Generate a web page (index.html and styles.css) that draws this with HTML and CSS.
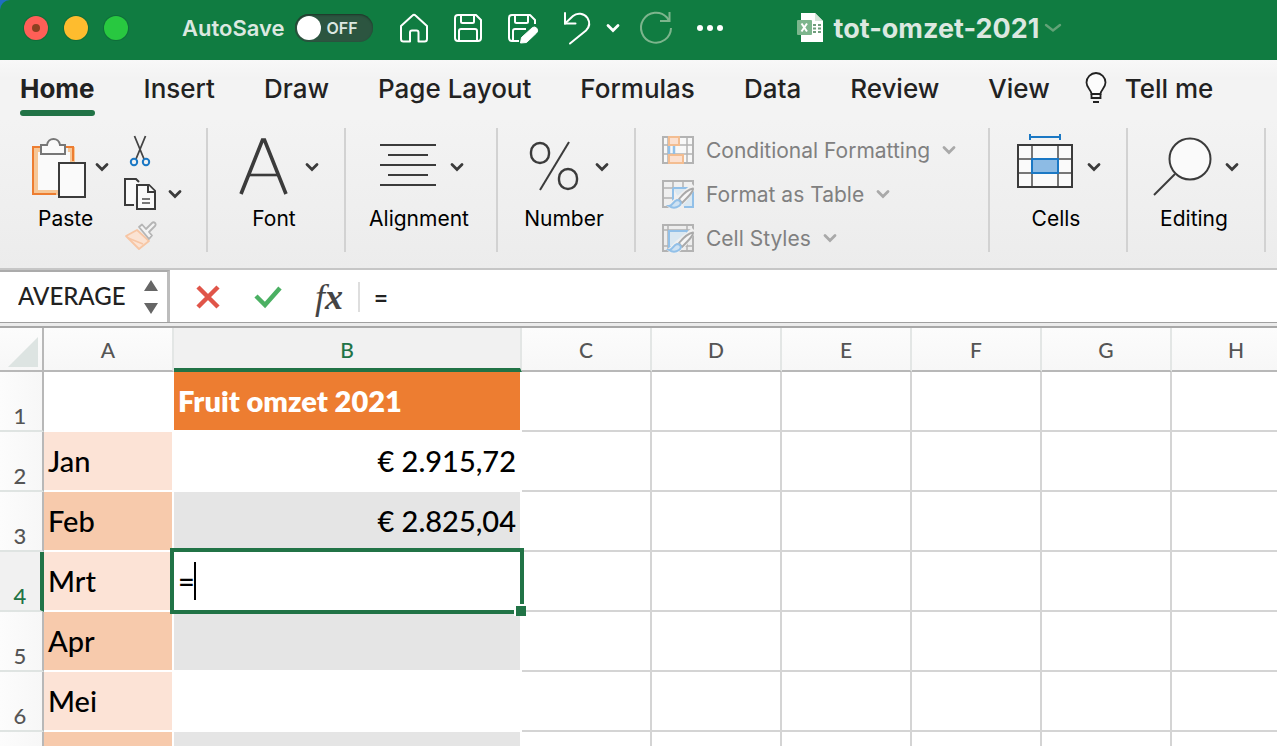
FILE: index.html
```
<!DOCTYPE html>
<html lang="nl">
  <head>
    <meta charset="UTF-8" />
    <meta name="viewport" content="width=device-width, initial-scale=1.0" />
    <title>tot-omzet-2021</title>
    <link rel="stylesheet" href="styles.css" />
  </head>
  <body>
    <svg class="symbols" aria-hidden="true">
      <symbol id="chevron" viewBox="0 0 14 14">
        <path d="M2 4.500L7 9.500L12 4.500" fill="none" stroke="currentColor" stroke-width="2.800" stroke-linecap="round" />
      </symbol>
      <symbol id="brush" viewBox="0 0 32 32">
        <path d="M5 28L14 19L30 6L34 10L24 24L16 31H8Z" fill="#f0f0f0" />
        <path d="M17 21C22 15 27 11 31 10.500C32 13 27 18 20 25Z" fill="#f6f6f6" stroke="#a9a9a9" stroke-width="1.800" />
        <path d="M7 28C11 28 11 23 15 22C19 22 20 26 17 28C14 30 10 30 7 28Z" fill="#cfe2f2" stroke="#92c0e8" stroke-width="2" />
      </symbol>
    </svg>

    <header class="titlebar">
      <div class="lights">
        <button class="light close" aria-label="Close"></button>
        <button class="light minimize" aria-label="Minimize"></button>
        <button class="light zoom" aria-label="Zoom"></button>
      </div>

      <label class="autosave">
        AutoSave
        <input type="checkbox" />
        <span class="switch">OFF</span>
      </label>

      <div class="quick-access">
        <button aria-label="Home">
          <svg width="32" height="32" viewBox="0 0 32 32" fill="none" stroke="#fff" stroke-width="2" stroke-linejoin="round">
            <path d="M3 14L14.500 3.500Q16 2 17.500 3.500L29 14V27Q29 29.500 26.500 29.500H20.500V20.500Q20.500 18.500 18.500 18.500H14Q12 18.500 12 20.500V29.500H5.500Q3 29.500 3 27Z" />
          </svg>
        </button>
        <button aria-label="Save">
          <svg width="32" height="32" viewBox="0 0 32 32" fill="none" stroke="#fff" stroke-width="2" stroke-linejoin="round">
            <path d="M6 3H24L29 8V26Q29 29 26 29H6Q3 29 3 26V6Q3 3 6 3Z" />
            <path d="M9 3V9.500Q9 11 10.500 11H20.500Q22 11 22 9.500V3" />
            <path d="M7 29V19Q7 17 9 17H23Q25 17 25 19V29" />
          </svg>
        </button>
        <button aria-label="Save As">
          <svg width="32" height="32" viewBox="0 0 32 32" fill="none" stroke="#fff" stroke-width="2" stroke-linejoin="round">
            <path d="M29 12V8L24 3H6Q3 3 3 6V26Q3 29 6 29H13" />
            <path d="M9 3V9.500Q9 11 10.500 11H20.500Q22 11 22 9.500V3" />
            <path d="M7 29V19Q7 17 9 17H20" />
            <path d="M14.500 31L15.500 25.500L26.500 15.500Q29 14 31 16.500Q32.500 19 30.500 21L20.500 30.500Z" fill="#fff" stroke-width="1" />
          </svg>
        </button>
        <button aria-label="Undo">
          <svg width="32" height="32" viewBox="0 0 32 32" fill="none" stroke="#fff" stroke-width="2" stroke-linecap="round">
            <path d="M5 1V11.500H15.500" />
            <path d="M5 11.500L13 4C17 0.500 24 1 27.500 6C30.500 11 29.500 15 26 18.500L10 31.500" />
          </svg>
        </button>
        <button class="undo-menu" aria-label="Undo history">
          <svg width="14" height="14"><use href="#chevron" /></svg>
        </button>
        <button class="redo" aria-label="Redo" disabled>
          <svg width="32" height="32" viewBox="0 0 32 32" fill="none" stroke="#7db58d" stroke-width="2">
            <path d="M31 16A15 15 0 1 1 27 5.500L29 9M20 9H29.500V0" />
          </svg>
        </button>
        <button aria-label="More">
          <svg width="32" height="32" viewBox="0 0 32 32" fill="#fff">
            <circle cx="6" cy="16" r="3" />
            <circle cx="16" cy="16" r="3" />
            <circle cx="26" cy="16" r="3" />
          </svg>
        </button>
      </div>

      <div class="document">
        <svg width="28" height="32" viewBox="0 0 28 32">
          <path d="M5 1H19L27 9V30H5Z" fill="#fff" />
          <path d="M19 1V9H27Z" fill="#d5e6da" />
          <path d="M17 13H20M22 13H25M17 16.500H20M22 16.500H25M17 20H20M22 20H25" stroke="#6f9d7c" stroke-width="2" />
          <rect x="1" y="8" width="15" height="15" rx="1" fill="#7db58d" />
          <path d="M5.500 11.500L11 19.500M11 11.500L5.500 19.500" stroke="#fff" stroke-width="2" />
        </svg>
        <h1>tot-omzet-2021</h1>
        <svg class="document-arrow" width="16" height="16" viewBox="0 0 16 16" fill="none" stroke="#62a277" stroke-width="2.400" stroke-linecap="round">
          <path d="M1 5L8 10.500L15 5" />
        </svg>
      </div>
    </header>

    <nav class="tabs">
      <a class="active" href="#home">Home</a>
      <a href="#insert">Insert</a>
      <a href="#draw">Draw</a>
      <a href="#layout">Page Layout</a>
      <a href="#formulas">Formulas</a>
      <a href="#data">Data</a>
      <a href="#review">Review</a>
      <a href="#view">View</a>
      <a class="tell-me" href="#tell-me">
        <svg width="22" height="32" viewBox="0 0 22 32" fill="none" stroke="#222" stroke-width="1.800">
          <path d="M6.500 22C6.500 18 1.500 16 1.500 10.500A9.500 9.500 0 0 1 20.500 10.500C20.500 16 15.500 18 15.500 22Z" fill="#fcfcfc" />
          <path d="M6.500 22V26H15.500V22M8 30H14" />
        </svg>
        Tell me
      </a>
    </nav>

    <section class="ribbon">
      <div class="group clipboard">
        <button class="tool">
          <span class="tool-icon">
            <svg width="56" height="64" viewBox="0 0 56 64">
              <path d="M10 12H4V54H26M36 12H40V26" fill="none" stroke="#f6c797" stroke-width="6" />
              <path d="M6 14H38V28H26V52H6Z" fill="#fafafa" />
              <path d="M10 9H1V56H24M34 9H41V23" fill="none" stroke="#ed7d31" stroke-width="2" />
              <path d="M9 7H15C16 -1 27 -1 28 7H33V16H9Z" fill="#fafafa" stroke="#777" stroke-width="2" />
              <rect x="27" y="25" width="26" height="34" fill="#fafafa" stroke="#3b3b3b" stroke-width="2" />
            </svg>
            <svg width="14" height="14"><use href="#chevron" /></svg>
          </span>
          Paste
        </button>
        <div class="small-tools">
          <button aria-label="Cut">
            <svg width="32" height="32" viewBox="0 0 32 32" fill="none">
              <path d="M10.500 0L20 23M21.500 0L12 23" stroke="#444" stroke-width="1.800" />
              <circle cx="10" cy="26" r="3.200" stroke="#1b78c4" stroke-width="2" />
              <circle cx="22" cy="26" r="3.200" stroke="#1b78c4" stroke-width="2" />
            </svg>
          </button>
          <button aria-label="Copy">
            <svg width="32" height="32" viewBox="0 0 32 32" fill="#fafafa" stroke="#3b3b3b" stroke-width="2">
              <path d="M10 27H1V1H12L15 4" />
              <path d="M13 7H25L31 13V31H13Z" />
              <path d="M24 7V14H31" />
              <path d="M18 21H26M18 25H26" stroke="#777" stroke-width="1.800" />
            </svg>
            <svg width="14" height="14"><use href="#chevron" /></svg>
          </button>
          <button aria-label="Format Painter" disabled>
            <svg width="32" height="32" viewBox="0 0 32 32" stroke-width="1.800" stroke-linejoin="round">
              <path d="M13 10L2 16L15 29L25 21Z" fill="#fbe3d3" stroke="#f7c6a4" />
              <path d="M4 18L19 24" stroke="#f7c6a4" />
              <path d="M15 7L18 4.500L22 9L28 3C30 1 33 4 31 6L25 12L28 15.500L25 19Z" fill="#f4f4f4" stroke="#b5b5b5" />
            </svg>
          </button>
        </div>
      </div>

      <div class="group">
        <button class="tool">
          <span class="tool-icon">
            <svg width="56" height="64" viewBox="0 0 56 64" fill="none" stroke="#3b3b3b" stroke-width="3.600">
              <path d="M6 58L27.500 4H29.500L51 58" />
              <path d="M14 39H43" stroke-width="2.600" />
            </svg>
            <svg width="14" height="14"><use href="#chevron" /></svg>
          </span>
          Font
        </button>
      </div>

      <div class="group wide">
        <button class="tool">
          <span class="tool-icon">
            <svg width="56" height="64" viewBox="0 0 56 64" stroke="#3b3b3b" stroke-width="2">
              <path d="M0 9H56M8 19H48M0 29H56M8 39H48M0 49H56" />
            </svg>
            <svg width="14" height="14"><use href="#chevron" /></svg>
          </span>
          Alignment
        </button>
      </div>

      <div class="group">
        <button class="tool">
          <span class="tool-icon">
            <svg width="56" height="64" viewBox="0 0 56 64" fill="none" stroke="#3b3b3b" stroke-width="2.400">
              <rect x="6" y="7" width="18" height="20" rx="9" />
              <rect x="34" y="33" width="18" height="20" rx="9" />
              <path d="M44 6L15 54" stroke-width="2" />
            </svg>
            <svg width="14" height="14"><use href="#chevron" /></svg>
          </span>
          Number
        </button>
      </div>

      <div class="group styles">
        <button disabled>
          <svg width="32" height="32" viewBox="0 0 32 32" fill="none" stroke="#b3b3b3" stroke-width="2">
            <path d="M1 3H31V29H1Z" fill="#f8f8f8" />
            <path d="M6 3V29M25 3V29M1 11H31M1 20H31" stroke-width="1.500" />
            <path d="M7 3H17V11H7ZM7 21H21V29H7Z" fill="#fbe0d0" stroke="#f3bd91" />
            <path d="M7 12V20M12 12V20" stroke="#92c0e8" stroke-width="2.500" />
          </svg>
          Conditional Formatting
          <svg width="14" height="14"><use href="#chevron" /></svg>
        </button>
        <button disabled>
          <svg width="32" height="32" viewBox="0 0 32 32" fill="none" stroke="#b3b3b3" stroke-width="2">
            <path d="M31 8V3H1V29H8" />
            <path d="M11 3V28M21 3V10M1 10H31M1 20H11" stroke-width="1.500" />
            <path d="M11 10H31V29H22M11 10V22" fill="#dbe8f1" stroke="#92c0e8" />
            <use href="#brush" width="32" height="32" stroke="none" />
          </svg>
          Format as Table
          <svg width="14" height="14"><use href="#chevron" /></svg>
        </button>
        <button disabled>
          <svg width="32" height="32" viewBox="0 0 32 32" fill="none" stroke="#b3b3b3" stroke-width="2">
            <path d="M1 3H31V29H1Z" />
            <path d="M6 3V29M25 3V29M1 8H31M1 24H31" stroke-width="1.500" />
            <path d="M7 25V9H25V12L12 25Z" fill="#dbe8f1" stroke="#92c0e8" />
            <use href="#brush" width="32" height="32" stroke="none" />
          </svg>
          Cell Styles
          <svg width="14" height="14"><use href="#chevron" /></svg>
        </button>
      </div>

      <div class="group">
        <button class="tool">
          <span class="tool-icon">
            <svg width="56" height="64" viewBox="0 0 56 64" fill="none">
              <rect x="1" y="9" width="54" height="42" fill="#fafafa" />
              <path d="M15 9V51M41 9V51M1 23H55M1 37H55" stroke="#777" stroke-width="2" />
              <rect x="1" y="9" width="54" height="42" stroke="#3b3b3b" stroke-width="2" />
              <rect x="15" y="23" width="26" height="14" fill="#8dbbe4" stroke="#1b78c4" stroke-width="2" />
              <path d="M13 1H43M13 -2V4M43 -2V4" stroke="#1b78c4" stroke-width="2" />
            </svg>
            <svg width="14" height="14"><use href="#chevron" /></svg>
          </span>
          Cells
        </button>
      </div>

      <div class="group">
        <button class="tool">
          <span class="tool-icon">
            <svg width="56" height="64" viewBox="0 0 56 64" fill="none" stroke="#3b3b3b" stroke-width="2">
              <circle cx="35" cy="23" r="20.500" fill="#fafafa" />
              <path d="M20 38L-1 59" />
            </svg>
            <svg width="14" height="14"><use href="#chevron" /></svg>
          </span>
          Editing
        </button>
      </div>
    </section>

    <div class="formula-bar">
      <div class="name-box">
        <input type="text" value="AVERAGE" aria-label="Name box" />
        <button aria-label="Names">
          <svg width="14" height="36" viewBox="0 0 14 36" fill="#666">
            <path d="M7 1L14 12H0ZM7 35L14 24H0Z" />
          </svg>
        </button>
      </div>
      <button aria-label="Cancel">
        <svg width="28" height="28" viewBox="0 0 28 28" stroke="#e05549" stroke-width="4.500">
          <path d="M4 4L24 24M24 4L4 24" />
        </svg>
      </button>
      <button aria-label="Enter">
        <svg width="28" height="28" viewBox="0 0 28 28" fill="none" stroke="#4bb063" stroke-width="4.500">
          <path d="M2 13L11 22L26 5" />
        </svg>
      </button>
      <button class="fx" aria-label="Insert function"><i>f<b>x</b></i></button>
      <input class="formula" type="text" value="=" aria-label="Formula" />
    </div>

    <main class="sheet">
      <table>
        <colgroup>
          <col class="col-head" />
          <col />
          <col class="col-wide" />
          <col />
          <col />
          <col />
          <col />
          <col />
          <col />
        </colgroup>
        <thead>
          <tr>
            <th class="corner" aria-label="Select all">
              <svg width="30" height="30" viewBox="0 0 30 30"><path d="M30 0V30H0Z" fill="#dde4e2" /></svg>
            </th>
            <th>A</th>
            <th class="selected">B</th>
            <th>C</th>
            <th>D</th>
            <th>E</th>
            <th>F</th>
            <th>G</th>
            <th>H</th>
          </tr>
        </thead>
        <tbody>
          <tr>
            <th>1</th>
            <td class="month-blank"></td>
            <td class="title">Fruit omzet 2021</td>
            <td></td><td></td><td></td><td></td><td></td><td></td>
          </tr>
          <tr>
            <th>2</th>
            <td class="month">Jan</td>
            <td class="amount">€ 2.915,72</td>
            <td></td><td></td><td></td><td></td><td></td><td></td>
          </tr>
          <tr>
            <th>3</th>
            <td class="month dark">Feb</td>
            <td class="amount dark">€ 2.825,04</td>
            <td></td><td></td><td></td><td></td><td></td><td></td>
          </tr>
          <tr>
            <th class="selected">4</th>
            <td class="month">Mrt</td>
            <td class="editing">
              <div class="editor">
                <input type="text" value="=" aria-label="B4" />
                <span class="caret"></span>
                <span class="handle"></span>
              </div>
            </td>
            <td></td><td></td><td></td><td></td><td></td><td></td>
          </tr>
          <tr>
            <th>5</th>
            <td class="month dark">Apr</td>
            <td class="amount dark"></td>
            <td></td><td></td><td></td><td></td><td></td><td></td>
          </tr>
          <tr>
            <th>6</th>
            <td class="month">Mei</td>
            <td class="amount"></td>
            <td></td><td></td><td></td><td></td><td></td><td></td>
          </tr>
          <tr>
            <th></th>
            <td class="month dark"></td>
            <td class="amount dark"></td>
            <td></td><td></td><td></td><td></td><td></td><td></td>
          </tr>
        </tbody>
      </table>
    </main>
  </body>
</html>
```
FILE: styles.css
```
* {
  margin: 0;
  padding: 0;
  box-sizing: border-box;
}

body {
  display: flex;
  flex-direction: column;
  height: 100vh;
  overflow: hidden;
  background: #1f6fc0;
  font-family: Inter, "Liberation Sans", sans-serif;
  color: #222;
}

button,
input {
  border: none;
  background: none;
  font: inherit;
  color: inherit;
  outline: none;
}

svg {
  display: block;
  flex: none;
  overflow: visible;
}

.symbols {
  position: absolute;
  width: 0;
  height: 0;
}

/* Title bar */
.titlebar {
  display: flex;
  align-items: center;
  height: 60px;
  flex: none;
  padding: 0 24px 4px;
  background: #107c41;
  border-top-left-radius: 10px;
  color: #fff;
}

.lights {
  display: flex;
  gap: 16px;
}

.light {
  display: flex;
  align-items: center;
  justify-content: center;
  width: 24px;
  height: 24px;
  border-radius: 50%;
  box-shadow: 0 0 0 1px #0f6e3a;
}

.close {
  background: #ff5f57;
}

.close::after {
  content: "";
  width: 8px;
  height: 8px;
  border-radius: 50%;
  background: #8c4020;
}

.minimize {
  background: #febc2e;
}

.zoom {
  background: #28c840;
}

.autosave {
  display: flex;
  align-items: center;
  gap: 10px;
  margin-left: 54px;
  font-size: 22px;
  font-weight: 600;
  color: #dce8e0;
}

.autosave input {
  position: absolute;
  opacity: 0;
}

.switch {
  display: flex;
  align-items: center;
  width: 78px;
  height: 28px;
  padding-left: 2px;
  gap: 6px;
  border-radius: 14px;
  background: #2c5540;
  box-shadow: inset 0 1px 2px #1c3527;
  font-size: 16px;
}

.switch::before {
  content: "";
  width: 24px;
  height: 24px;
  border-radius: 50%;
  background: #fff;
}

.quick-access {
  display: flex;
  align-items: center;
  gap: 22px;
  margin-left: 25px;
}

.undo-menu {
  margin: 0 -2px 0 -8px;
}

.document {
  display: flex;
  align-items: center;
  gap: 10px;
  margin-left: 70px;
}

.document h1 {
  font-size: 27px;
  font-weight: 700;
  color: #dce8e0;
}

.document-arrow {
  margin-left: -4px;
}

/* Tabs */
.tabs {
  display: flex;
  flex: none;
  gap: 49px;
  height: 60px;
  padding: 0 20px;
  background: linear-gradient(#f8f8f8, #f3f3f3 30%);
}

.tabs a {
  display: flex;
  align-items: center;
  height: 56px;
  font-size: 26px;
  font-weight: 500;
  color: #222;
  text-decoration: none;
  white-space: nowrap;
}

.tabs .active {
  position: relative;
  font-weight: 700;
}

.tabs .active::after {
  content: "";
  position: absolute;
  left: 0;
  right: 0;
  bottom: 0;
  height: 6px;
  border-radius: 3px;
  background: #217346;
}

.tabs .tell-me {
  gap: 18px;
  margin-left: -14px;
}

/* Ribbon */
.ribbon {
  display: flex;
  flex: none;
  height: 150px;
  padding: 8px 0 16px;
  border-bottom: 2px solid #c6c6c6;
  background: linear-gradient(#f3f3f3, #ececec);
}

.group {
  display: flex;
  justify-content: center;
  width: 138px;
  flex: none;
  border-right: 2px solid #d2d2d2;
}

.group.clipboard {
  justify-content: flex-start;
  width: 208px;
  gap: 15px;
  padding-left: 32px;
}

.group.wide {
  width: 152px;
}

.tool {
  display: flex;
  flex-direction: column;
  align-items: center;
  padding: 8px 4px 0 0;
  font-size: 21px;
  line-height: 26px;
  color: #000;
}

/* The arrow hangs out to the right, so the label sits nearer the icon */
.tool-icon {
  display: flex;
  gap: 14px;
  height: 70px;
  margin-right: -6px;
  color: #3b3b3b;
}

.tool-icon svg:last-child {
  margin-top: 24px;
}

.clipboard .tool {
  align-items: flex-start;
  padding: 10px 0 0;
  text-indent: 6px;
}

.clipboard .tool-icon {
  gap: 7px;
  height: 68px;
  margin-right: 0;
}

.clipboard .tool-icon svg:last-child {
  margin-top: 22px;
}

.small-tools {
  display: flex;
  flex-direction: column;
  gap: 10px;
  padding-top: 8px;
}

.small-tools button {
  display: flex;
  align-items: center;
  gap: 12px;
  color: #3b3b3b;
}

.group.styles {
  flex-direction: column;
  justify-content: flex-start;
  width: 354px;
  padding-left: 26px;
}

.styles button {
  display: flex;
  flex: none;
  align-items: center;
  gap: 12px;
  height: 44px;
  font-size: 21px;
  color: #808080;
}

.styles svg:last-child {
  color: #a9a9a9;
}

/* Formula bar */
.formula-bar {
  display: flex;
  align-items: center;
  flex: none;
  height: 58px;
  padding-bottom: 2px;
  border-bottom: 2px solid #a8a8a8;
  background: linear-gradient(#fff 52px, #a0a0a0 52px, #a0a0a0 53px, #ececec 53px);
}

.name-box {
  display: flex;
  align-items: center;
  align-self: flex-start;
  width: 170px;
  height: 52px;
  padding: 0 9px 0 18px;
  border-top: 2px solid #ababab;
  border-right: 3px solid #bdbdbd;
}

.name-box input {
  width: 126px;
  padding-bottom: 4px;
  font-family: Lato, "Liberation Sans", sans-serif;
  font-size: 24px;
  font-weight: 500;
}

.formula-bar > button {
  width: 28px;
  margin-left: 24px;
}

.formula-bar > button + button {
  margin-left: 32px;
}

.formula-bar > .fx {
  width: 30px;
  height: 30px;
  padding-right: 14px;
  border-right: 2px solid #dedede;
  box-sizing: content-box;
  font-family: "Liberation Serif", serif;
  font-size: 36px;
  line-height: 24px;
  color: #444;
}

.formula {
  flex: 1;
  min-width: 0;
  padding-left: 14px;
  font-family: Lato, "Liberation Sans", sans-serif;
  font-size: 24px;
  font-weight: 700;
}

/* Sheet */
.sheet {
  flex: 1;
  min-height: 0;
  overflow: hidden;
  background: #fff;
  font-family: Lato, "Liberation Sans", sans-serif;
}

table {
  width: 1302px;
  table-layout: fixed;
  border-collapse: separate;
  border-spacing: 0;
}

col {
  width: 130px;
}

.col-head {
  width: 44px;
}

.col-wide {
  width: 348px;
}

thead th {
  height: 44px;
  border-right: 2px solid #e3e6e5;
  border-bottom: 2px solid #b8b8b8;
  background: linear-gradient(#fcfcfc, #f7f7f7);
  font-size: 21px;
  font-weight: 500;
  color: #555;
}

thead .selected {
  padding-top: 2px;
  border-bottom: 4px solid #217346;
  background: #f1f1f1;
  color: #217346;
}

thead .corner {
  border-right-color: #b8b8b8;
}

.corner svg {
  margin: 6px 0 0 8px;
}

tbody th {
  height: 60px;
  padding: 0 2px 2px 0;
  border-right: 2px solid #b8b8b8;
  border-bottom: 2px solid #dfe4e2;
  background: linear-gradient(90deg, #fcfcfc, #f7f7f7);
  font-size: 22px;
  font-weight: 500;
  line-height: 24px;
  vertical-align: bottom;
  color: #555;
}

tbody .selected {
  padding-right: 0;
  border-right: 4px solid #217346;
  background: #f1f1f1;
  color: #217346;
}

td {
  height: 60px;
  padding: 0 4px;
  border-right: 2px solid #d4d4d4;
  border-bottom: 2px solid #d4d4d4;
  font-size: 29px;
  font-weight: 500;
  line-height: 34px;
  color: #000;
  white-space: nowrap;
}

.month-blank,
.month,
.title,
.amount,
.editing {
  border-color: #fff;
}

.month,
.title,
.amount.dark {
  background-clip: padding-box;
}

.month {
  background-color: #fce3d6;
}

.month.dark {
  background-color: #f7caac;
}

.title {
  background-color: #ed7d31;
  font-weight: 800;
  color: #fff;
}

.amount {
  text-align: right;
}

.amount.dark {
  background-color: #e5e5e5;
}

.editing {
  position: relative;
}

/* Frame lies over the edges of the neighbouring cells */
.editor {
  position: absolute;
  inset: -4px;
  display: flex;
  align-items: center;
  padding-left: 4px;
  border: 4px solid #217346;
  background: #fff;
}

.editor input {
  width: 16px;
}

.caret {
  width: 2px;
  height: 38px;
  background: #000;
}

.handle {
  position: absolute;
  right: -6px;
  bottom: -6px;
  width: 12px;
  height: 12px;
  border-top: 2px solid #fff;
  border-left: 2px solid #fff;
  background: #217346;
}
```
